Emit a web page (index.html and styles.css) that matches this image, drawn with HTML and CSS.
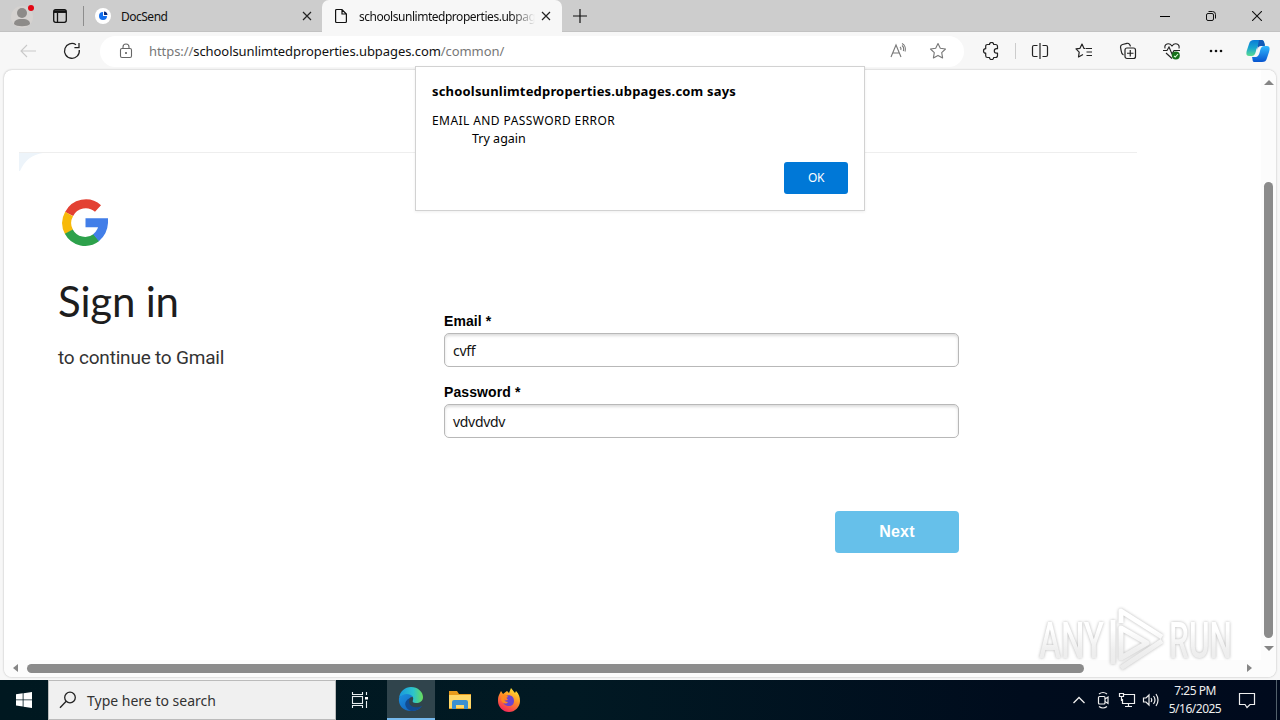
FILE: index.html
```html
<!DOCTYPE html>
<html lang="en">
<head>
<meta charset="utf-8">
<title>Sign in</title>
<link rel="stylesheet" href="styles.css">
</head>
<body>
<div class="desktop">
  <header class="titlebar">
    <div class="cell"><svg width="44" height="32"><circle cx="22" cy="17" r="11" fill="#d5d2d0"/><circle cx="22" cy="13" r="5" fill="#8d8b89"/><path d="M14 24c0-3 2-5 8-5s8 2 8 5c-2 3-14 3-16 0z" fill="#8d8b89"/><circle cx="31" cy="8" r="3" fill="#e30613"/></svg></div>
    <div class="cell"><svg width="16" height="16" fill="none" stroke="#111" stroke-width="1.3"><rect x="1.7" y="1.7" width="12.6" height="12.6" rx="2"/><path d="M2 4h12M5.5 5v9" /><path d="M2 3.5h12" stroke-width="2.5"/></svg></div>
    <div class="divider"></div>
    <div class="tab docsend"><svg width="16" height="16"><circle cx="8" cy="8" r="8" fill="#fff"/><path d="M8 4a4 4 0 1 0 4 4H8z" fill="#1470f0"/><path d="M9 3.5a4 4 0 0 1 3.5 3.5H9z" fill="#0a2a7a"/></svg><span class="tabtext">DocSend</span><svg class="x" width="10" height="10"><path d="M1 1l8 8M9 1l-8 8"/></svg></div>
    <div class="tab active"><svg width="14" height="16" fill="none" stroke="#111" stroke-width="1.2"><path d="M1.6 2.5a1 1 0 0 1 1-1H8l4.400 4.500v7.500a1 1 0 0 1-1 1H2.600a1 1 0 0 1-1-1zM8 1.500V6h4.400"/></svg><span class="tabtext long">schoolsunlimtedproperties.ubpag</span><svg class="x" width="10" height="10"><path d="M1 1l8 8M9 1l-8 8"/></svg></div>
    <div class="cell"><svg width="14" height="14" stroke="#111" stroke-width="1.2"><path d="M7 0v14M0 7h14"/></svg></div>
    <div></div>
    <div class="cell"><svg width="10" height="10" stroke="#000"><path d="M0 5.500h10"/></svg></div>
    <div class="cell"><svg width="12" height="12" fill="none" stroke="#111"><rect x="1.500" y="3.500" width="7" height="7" rx="1.500"/><path d="M3.500 1.500h4a3 3 0 0 1 3 3v4"/></svg></div>
    <div class="cell"><svg width="10" height="10" stroke="#111" stroke-width="1.1"><path d="M0 0l10 10M10 0L0 10"/></svg></div>
  </header>

  <nav class="toolbar">
    <div class="cell"><svg width="16" height="14" fill="none" stroke="#c9c9c9" stroke-width="1.1"><path d="M16 7H1M7 1L1 7l6 6"/></svg></div>
    <div class="cell"><svg width="18" height="18" fill="none" stroke="#222" stroke-width="1.3"><path d="M16.300 8A7.400 7.400 0 1 1 13 2.700M16 1v4.600h-4.600"/></svg></div>
    <div class="address">
      <svg width="14" height="16" fill="none" stroke="#666" stroke-width="1.100"><rect x="1.500" y="5.500" width="11" height="9" rx="1.500"/><path d="M4 5.500V4a3 3 0 0 1 6 0v1.500"/><circle cx="7" cy="10" r=".5" fill="#666"/></svg>
      <span class="url">https://<b>schoolsunlimtedproperties.ubpages.com</b>/common/</span>
      <svg width="17" height="16" fill="none" stroke="#777" stroke-width="1.100"><path d="M1 14L6 2l5 12M2.700 10h6.600M10 4c1 .8 1.200 2 .8 3M12 2.500c1.600 1.300 2 3.500 1.300 5.500M12 .5c3 1.500 4 5 3 8"/></svg>
      <svg class="star" width="18" height="18" viewBox="0 0 18 18" fill="none" stroke="#777" stroke-width="1.100" stroke-linejoin="round"><path d="M9 1.500l2.300 4.800 5.200.7-3.800 3.600.9 5.300L9 13.400l-4.600 2.500.9-5.300L1.500 7l5.200-.7z"/></svg>
    </div>
    <div class="cell"><svg width="18" height="18" fill="none" stroke="#222" stroke-width="1.200" stroke-linejoin="round"><path d="M5.500 2.500h2a2.100 2.100 0 0 1 4.200 0h1.800q2 0 2 2v2.200h-1a2.200 2.200 0 0 0 0 4.400h1v2.400q0 2-2 2h-1.800a2.100 2.100 0 0 1-4.200 0h-2q-1.800 0-1.800-1.800v-2.600a2.200 2.200 0 0 1 0-4.400V4.300q0-1.800 1.800-1.800z"/></svg></div>
    <div class="sep"></div>
    <div class="cell split"><svg width="18" height="16" fill="none" stroke="#222" stroke-width="1.200"><path d="M6.500 2.500H3q-1.500 0-1.500 1.500v8q0 1.500 1.500 1.500h3.500M11.500 2.500H15q1.500 0 1.500 1.500v8q0 1.500-1.500 1.500h-3.500M9 0v16"/></svg></div>
    <div class="cell"><svg width="18" height="18" fill="none" stroke="#222" stroke-width="1.200" stroke-linejoin="round"><path d="M10.500 6.500H17M11.500 10H17M11.500 13.500H17M10 6.500H9L7 2 5 6.300l-4 .6 3.200 3.200L3.500 15 8 12.500"/></svg></div>
    <div class="cell"><svg width="18" height="18" fill="none" stroke="#222" stroke-width="1.200"><rect x="6" y="6" width="10.500" height="10.500" rx="2"/><path d="M11.250 8v6.500M8 11.250h6.500M4.500 13Q2.500 12 2.200 9L1.500 5q0-2 2-2.500L8 1.300q2.500-.5 3.500 3"/></svg></div>
    <div class="cell"><svg width="18" height="18" fill="none" stroke="#222" stroke-width="1.100"><path d="M2 6.500C1 2 6 0 9 4c3-4 8-2 7 2.500M0 8.500h4L6 5l3 7 2-3.500h6M3 11l6 5.500"/><circle cx="12.800" cy="13.500" r="4" fill="#17701b" stroke="none"/><path d="M11 14l1.300 1L15 12" stroke="#d8ffd8"/></svg></div>
    <div class="cell"><svg width="14" height="4" fill="#111"><circle cx="2" cy="2" r="1.300"/><circle cx="7" cy="2" r="1.300"/><circle cx="12" cy="2" r="1.300"/></svg></div>
    <div class="cell copilot"><svg width="24" height="24"><defs><linearGradient id="cp1" x2="0" y2="1"><stop stop-color="#0a7bd8"/><stop offset=".5" stop-color="#19a6cf"/><stop offset="1" stop-color="#5bdc90"/></linearGradient><linearGradient id="cp2" x2="0" y2="1"><stop stop-color="#30b9ff"/><stop offset="1" stop-color="#0754cf"/></linearGradient></defs><path d="M8 1h7c3 0 3 2 4 5h-4c-3 0-4 2-5 6s-2 5-5 5H3c-3 0-3-3-2-6l2-6c1-3 2-4 5-4z" fill="url(#cp1)"/><path d="M16 23H9c-3 0-2-2-3-5h3c3 0 4-2 5-6s2-5 5-5h2c3 0 3 3 2 6l-2 6c-1 3-2 4-5 4z" fill="url(#cp2)"/><path d="M13 1h2c3 0 3 2 4 6h-4c-2 0-3 1-4 4z" fill="#1359b6"/></svg></div>
  </nav>

  <main class="viewport">
    <section class="page">
      <div class="card">
        <svg class="corner" width="24" height="22"><path d="M0 0h24Q8 2 1 18H0z" fill="#edf4fa"/></svg>
        <div class="intro">
          <svg class="glogo" width="46" height="48" viewBox="0 0 46 48" fill="none" stroke-width="9"><path d="M7.100 15A18.500 18.500 0 0 1 36 9.500" stroke="#e34133"/><path d="M7 33A18.500 18.500 0 0 1 7.100 15" stroke="#f7b90a"/><path d="M34.500 38.500A18.500 18.500 0 0 1 6.800 32.600" stroke="#2da14b"/><path d="M23.500 23.800H41.500Q41 33 34 38.800" stroke="#427ee8"/></svg>
          <h1>Sign in</h1>
          <p>to continue to Gmail</p>
        </div>
        <form class="login">
          <label>Email *</label>
          <div class="field">cvff</div>
          <label>Password *</label>
          <div class="field">vdvdvdv</div>
          <div class="next">Next</div>
        </form>
      </div>
    </section>
    <div class="vscroll"><i class="up"></i><i class="vthumb"></i><i class="down"></i></div>
    <div class="hscroll"><i class="left"></i><i class="hthumb"></i><i class="right"></i></div>
  </main>

  <footer class="taskbar">
    <div class="cell"><svg width="16" height="16" fill="#fff"><path d="M0 2.300l6.700-1v6.200H0zM7.500 1.200L16 0v7.500H7.500zM0 8.300h6.700v6.200L0 13.600zM7.500 8.300H16V16l-8.500-1.300z"/></svg></div>
    <div class="search"><svg width="18" height="18" fill="none" stroke="#222" stroke-width="1.300"><circle cx="11" cy="6.500" r="5.300"/><path d="M7.200 10.300L1 16.800"/></svg><span>Type here to search</span></div>
    <div class="cell taskview"><svg width="18" height="18" fill="none" stroke="#e8eef0" stroke-width="1.100"><path d="M1.500 1v2.500h10V1M1.500 17v-2.500h10V17M15.500 1v3M15.500 10v7"/><rect x="1.500" y="5.500" width="10" height="7"/><path d="M14 6h3v2.500h-3z" fill="#fff" stroke="none"/></svg></div>
    <div class="cell running"><svg width="26" height="26"><defs><linearGradient id="e1" x2="1"><stop stop-color="#1897df"/><stop offset=".6" stop-color="#2cc4cc"/><stop offset="1" stop-color="#69dc59"/></linearGradient><linearGradient id="e2" x2="1" y2="1"><stop stop-color="#1b91e0"/><stop offset="1" stop-color="#1056b5"/></linearGradient></defs><path d="M1 12C2 5 7 1 13 1c7 0 12 5 12 10 0 4-3 6-7 6-3 0-4-1-3-3 2-5-8-7-14-2z" fill="url(#e1)"/><path d="M1 12c4-5 11-5 14-1-5-1-7 8-1 11 4 2 8 0 10-2-2 3-6 5-11 5C5 25 0 19 1 12z" fill="url(#e2)"/><path d="M12 12c-3 6 2 12 12 8-3 4-7 5-11 5-7-3-8-10-1-13z" fill="#124b91"/></svg></div>
    <div class="cell"><svg width="22" height="20"><path d="M0 1h8l2 3h12v15H0z" fill="#e89b1c"/><path d="M0 5h22v13H0z" fill="#ffd768"/><path d="M3 12q0-2 2-2h12q2 0 2 2v7h-4v-4H7v4H3z" fill="#3c8fd0"/></svg></div>
    <div class="cell"><svg width="24" height="26"><defs><linearGradient id="ff" x1=".8" x2=".3" y2="1"><stop stop-color="#ffed35"/><stop offset=".45" stop-color="#ff9226"/><stop offset="1" stop-color="#f5235c"/></linearGradient></defs><path d="M2 8l2-4 2 3 4-3 2 2 2-5 4 5 1-2c3 3 4 6 4 10 0 6-5 11-11 11S1 20 1 14c0-2 0-4 1-6z" fill="url(#ff)"/><path d="M8 9c5-2 9 0 9 5 0 3-2 5-5 5s-6-2-6-5l5-1z" fill="#6b44cf"/><path d="M5 8c3-1 5 0 6 2l-4 2c0 2 2 3 4 3-2 3-6 1-7-2z" fill="#ff8a1e"/></svg></div>
    <div></div>
    <div class="cell"><svg width="12" height="8" fill="none" stroke="#eee" stroke-width="1.300"><path d="M.5 7L6 1.500 11.500 7"/></svg></div>
    <div class="cell"><svg width="14" height="18" fill="none" stroke="#eee" stroke-width="1.200"><rect x="2.500" y="5.500" width="6.500" height="7.500" rx="1"/><path d="M9 8l3-2v6.500l-3-2M3 3q4-3 8 0M3 15.500q4 3 8 0"/></svg></div>
    <div class="cell"><svg width="18" height="16" fill="none" stroke="#eee" stroke-width="1.200"><path d="M6 2.500h10.500v9H4.500V7M10.500 11.500v3M7 14.500h7M1.500 1.500h4v3h-4zM3.500 4.500V9"/></svg></div>
    <div class="cell"><svg width="18" height="14" fill="none" stroke="#eee" stroke-width="1.200"><path d="M1.500 5h2.500L7 2v10L4 9H1.500zM9 5q1.500 2 0 4M11.500 3q3 4 0 8M14 1q4 6 0 12"/></svg></div>
    <div class="clock"><span>7:25 PM</span><span>5/16/2025</span></div>
    <div class="cell"><svg width="18" height="18" fill="none" stroke="#eee" stroke-width="1.200"><path d="M1.500 2.500h15v11H12L9 16.500 7 13.500H1.500z"/></svg></div>
    <div class="peek"></div>
  </footer>

  <div class="dialog">
    <strong>schoolsunlimtedproperties.ubpages.com says</strong>
    <p class="msg">EMAIL AND PASSWORD ERROR</p>
    <p class="msg second">Try again</p>
    <div class="ok">OK</div>
  </div>

  <svg class="watermark" width="220" height="68" viewBox="0 0 220 68">
    <defs><linearGradient id="fade" gradientUnits="userSpaceOnUse" x1="0" y1="8" x2="0" y2="62"><stop offset=".3" stop-color="#fff"/><stop offset=".65" stop-color="#ededed"/><stop offset="1" stop-color="#e9e9e9"/></linearGradient></defs>
    <g class="wm">
      <text x="8" y="52" textLength="65" lengthAdjust="spacingAndGlyphs">ANY</text>
      <text x="138" y="52" textLength="63" lengthAdjust="spacingAndGlyphs">RUN</text>
      <path d="M90 22v30l26-15zM82 58V14M90 17V5l41 26M90 62l41-27"/>
    </g>
  </svg>
</div>
</body>
</html>
```
FILE: styles.css
```css
* { box-sizing: border-box; }
body { margin: 0; overflow: hidden; font-family: "Noto Sans", "Open Sans", sans-serif; color: #111; }
svg { display: block; flex: none; }
.desktop { position: relative; width: 1280px; height: 720px; background: #f7f7f7; display: flex; flex-direction: column; }
.cell { display: flex; align-items: center; justify-content: center; }

.titlebar { height: 32px; flex: none; background: #cdcdcd; display: grid; grid-template-columns: 44px 32px 8px 238px 240px 36px 1fr 46px 46px 46px; box-shadow: inset 0 -1px #c2c2c2; }
.divider { border-right: 1px solid #8d8d8d; margin: 6px 0; }
.tab { display: flex; align-items: center; font-size: 12px; padding-right: 10px; }
.docsend { padding-left: 11px; }
.tabtext { margin-left: 10px; white-space: nowrap; letter-spacing: -.5px; }
.x { margin-left: auto; stroke: #222; stroke-width: 1.2; }
.active { background: #f7f7f7; border-radius: 7px 7px 0 0; padding: 0 11px 0 12px; }
.long { margin-left: 11px; letter-spacing: -.47px; -webkit-mask-image: linear-gradient(90deg, #000 152px, transparent 176px); }

.toolbar { height: 38px; flex: none; padding: 0 0 0 8px; display: grid; grid-template-columns: 40px 48px 872px 46px 6px 42px 44px 44px 44px 44px 42px; align-items: center; }
.address { height: 31px; margin: 0 4px; border-radius: 16px; background: #fff; display: flex; align-items: center; padding: 0 17px 0 19px; }
.url { margin: 0 auto 0 16px; font-size: 13px; color: #777; letter-spacing: -.07px; white-space: nowrap; }
.url b { color: #111; font-weight: 400; }
.star { margin-left: 22px; }
.sep { width: 1px; height: 16px; background: #ccc; margin-left: 1px; }
.split { margin-left: -3px; }
.copilot { margin-left: -2px; }

.viewport { height: 607px; flex: none; margin: 0 4px; background: #fff; border-radius: 8px; display: grid; grid-template-columns: 1257px 15px; grid-template-rows: 590px 17px; box-shadow: 0 0 2px #aaa; overflow: hidden; }
.page { padding: 82px 124px 0 15px; }
.card { border-top: 1px solid #eee; display: grid; grid-template-columns: 24px 401px 515px; align-items: start; }
.intro { padding: 46px 0 0 15px; }
.glogo { margin-left: 4px; }
h1 { margin: 26px 0 0; font: 400 42px/56px Lato, "Open Sans", sans-serif; letter-spacing: -.2px; color: #1d1d1d; }
.intro p { margin: 15px 0 0; font: 400 19px/28px Roboto, sans-serif; color: #333; letter-spacing: -.2px; }
.login { padding-top: 158px; }
label { display: block; font: 700 14px/20px "Liberation Sans", Arial, sans-serif; letter-spacing: .1px; color: #000; }
.field { height: 34px; margin: 2px 0 15px; border: 1px solid #b8b8b8; border-radius: 5px; box-shadow: inset 0 2px 3px #ddd; font: 14px/33px "Noto Sans", sans-serif; padding-left: 8px; letter-spacing: -.3px; }
.next { width: 124px; height: 42px; margin: 73px 0 0 auto; background: #66c0ea; border-radius: 4px; color: #fff; font: 700 16px/41px "Liberation Sans", Arial, sans-serif; text-align: center; letter-spacing: .2px; }

.vscroll { display: flex; flex-direction: column; align-items: center; padding-top: 10px; background: #fcfcfc; }
.up, .down { border: 5px solid transparent; border-top: 0; border-bottom: 5px solid #858585; }
.down { border-bottom: 0; border-top: 5px solid #858585; margin-top: 8px; }
.vthumb { width: 9px; height: 456px; margin-top: 97px; background: #8b8b8b; border-radius: 5px; }
.hscroll { grid-column: 1 / 3; display: flex; align-items: center; padding: 0 0 1px 9px; background: #fcfcfc; }
.left, .right { border: 4px solid transparent; border-left: 0; border-right: 5px solid #858585; }
.hthumb { width: 1057px; height: 9px; margin-left: 9px; background: #8b8b8b; border-radius: 5px; }
.right { border-right: 0; border-left: 5px solid #858585; margin-left: 163px; }

.taskbar { height: 40px; flex: none; margin-top: 3px; background: linear-gradient(90deg, #001820, #011923 45%, #000c1d 80%, #000a1d); display: grid; grid-template-columns: 48px 288px 51px 48px 50px 47px 1fr 24px 24px 24px 24px 64px 40px 13px; }
.search { background: #f0f0f0; border: 1px solid #bbb; display: flex; align-items: center; padding-left: 10px; font-size: 14px; color: #333; }
.search span { margin-left: 10px; letter-spacing: 0; }
.taskview { padding-right: 3px; }
.running { background: #30444c; border-bottom: 2px solid #76b9ed; }
.clock { color: #eee; font-size: 12px; line-height: 18px; text-align: center; padding-top: 2px; letter-spacing: -.5px; display: flex; flex-direction: column; }
.peek { border-left: 1px solid #52606b; margin-left: 9px; }

.dialog { position: absolute; left: 415px; top: 66px; width: 450px; height: 145px; background: #fff; border: 1px solid #d2d2d2; padding: 14px 16px; font-size: 12px; box-shadow: 0 1px 3px #0001; color: #000; }
.dialog strong { display: block; font-size: 13px; line-height: 20px; white-space: nowrap; letter-spacing: .18px; }
.msg { margin: 11px 0 0; line-height: 18px; white-space: nowrap; letter-spacing: .42px; }
.second { margin: 0 0 0 40px; font-size: 12.5px; letter-spacing: 0; }
.ok { width: 64px; height: 32px; margin: 14px 0 0 auto; background: #0078d7; color: #fff; border-radius: 3px; text-align: center; line-height: 32px; letter-spacing: -.4px; }

.watermark { position: absolute; left: 1031px; top: 606px; }
.wm { font: 500 50px Roboto, sans-serif; fill: url(#fade); filter: drop-shadow(0 0 1.5px #aaa); opacity: .85; }
.wm path { fill: none; stroke: url(#fade); stroke-width: 5; stroke-linejoin: round; }
```
